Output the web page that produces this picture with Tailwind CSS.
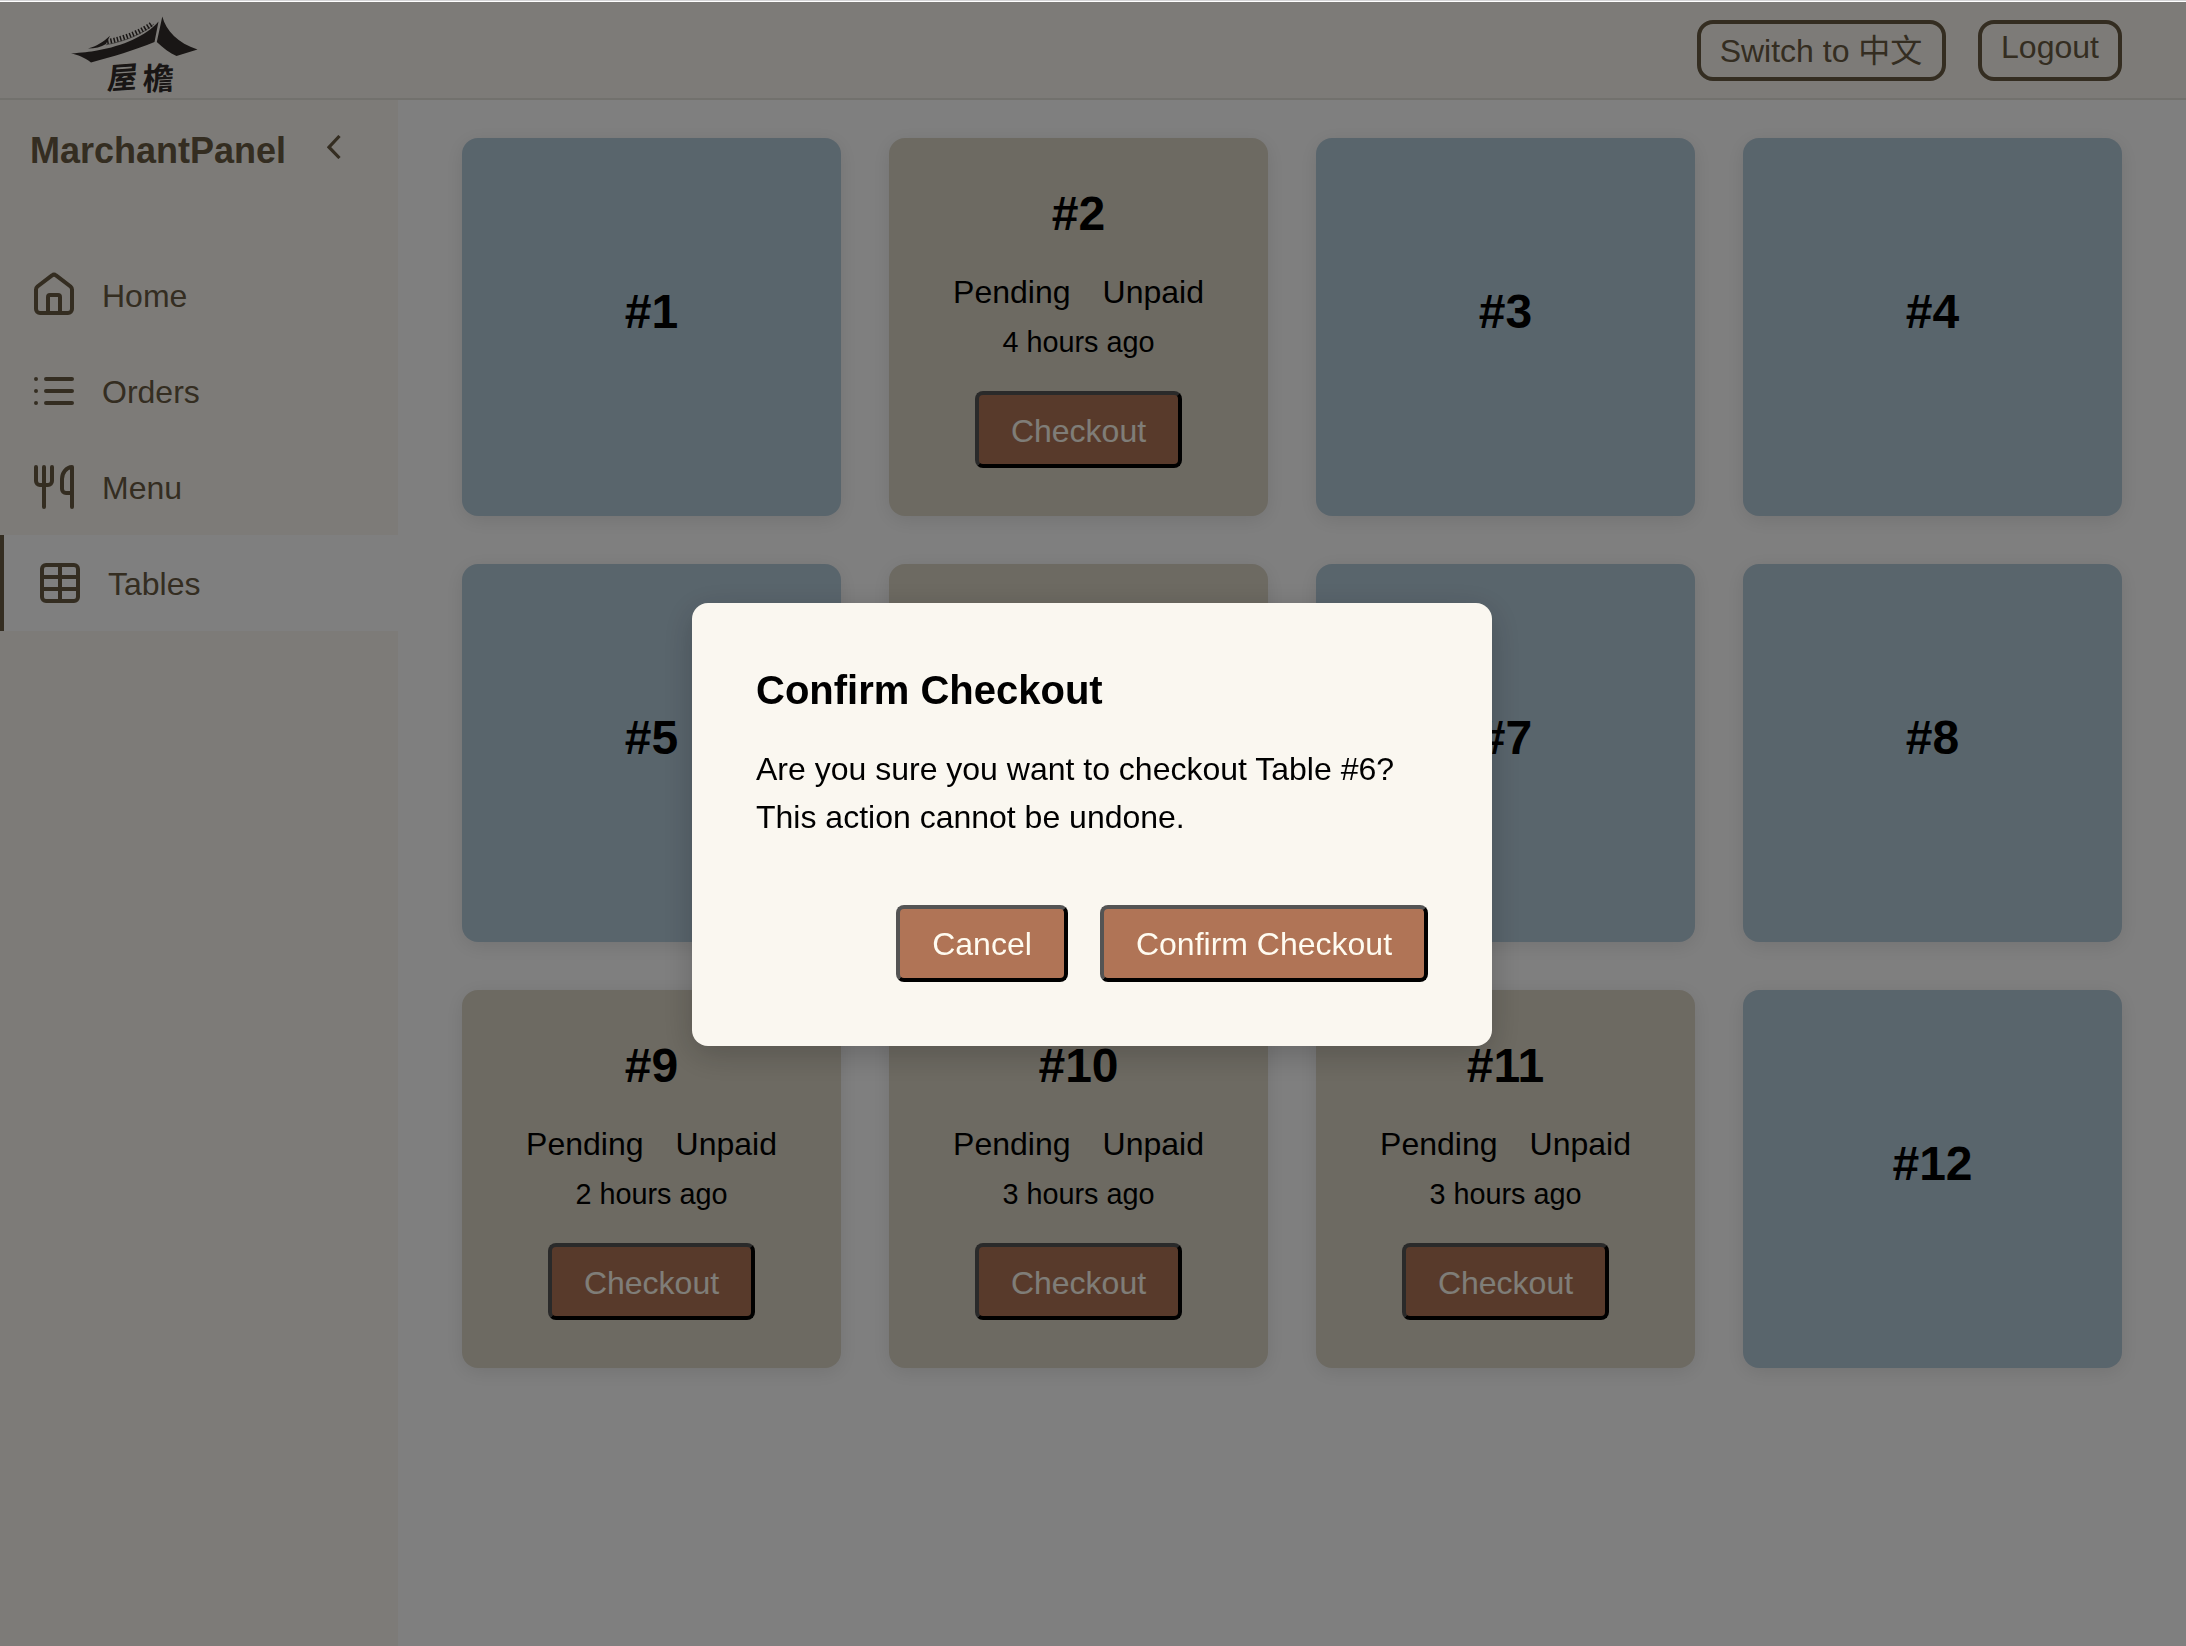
<!DOCTYPE html>
<html lang="en">
<head>
<meta charset="utf-8">
<title>MarchantPanel</title>
<script src="https://cdn.jsdelivr.net/npm/@tailwindcss/browser@4"></script>
</head>
<body class="flex h-[1646px] w-[2186px] flex-col overflow-hidden bg-white pt-[2px] font-['Liberation_Sans','Noto_Sans_CJK_SC',sans-serif] text-[32px] leading-[48px] text-black">
<div class="fixed inset-x-0 top-0 h-px bg-[#d4d4d6]"></div>
<header class="flex h-[98px] shrink-0 items-start justify-between border-b-2 border-[#e5e2da] bg-[#faf7f0] pr-16 text-[#695a43]">
  <svg class="h-[96px] w-[210px] overflow-visible text-[#332c2a]" viewBox="0 2 210 96" fill="currentColor">
    <path d="M71 53.500 C82 52.500 90 52 97 50.500 C123 46 146 36 158.500 21.500 L154.500 42 C135 50 112 57 91 62.500 C84 57 78 55 71 53.500Z"/>
    <path d="M162.300 16.500 C166 31 178 43 197.500 49.500 L176.500 56 C170 53 163 48 156.800 42Z"/>
    <path d="M88 48.500 C97 46 102 43 110 35.800 L106 44 C101 47 95 48.500 88 48.500Z"/>
    <path d="M106 44.800 C127 41 144 33 154 24" fill="none" stroke="currentColor" stroke-width="0.5"/>
    <path d="M107 41.700 C127 38 143 30.500 152.500 23.300" fill="none" stroke="currentColor" stroke-width="5" stroke-dasharray="1.500 1.800"/>
    <text x="0" y="0" transform="translate(106.500 89.500) rotate(-4) skewX(-10)" font-family="'Noto Sans CJK SC', sans-serif" font-weight="700" font-size="30">屋</text>
    <text x="0" y="0" transform="translate(142.500 90.500) rotate(-3) skewX(-4)" font-family="'Noto Sans CJK TC', sans-serif" font-weight="700" font-size="31">檐</text>
  </svg>
  <div class="flex gap-8 pt-[18px]">
    <button class="flex h-[61px] w-[249px] items-center justify-center whitespace-pre rounded-[16px] border-4 border-current pr-px pt-px">Switch to 中文</button>
    <button class="flex h-[61px] w-[144px] items-center justify-center rounded-[16px] border-4 border-current pb-[7px]">Logout</button>
  </div>
</header>
<div class="flex min-h-0 flex-1">
  <aside class="w-[398px] shrink-0 bg-[#faf7f0] text-[#695a43]">
    <div class="flex h-[147px] items-start pl-[30px] pt-[27px]">
      <h1 class="w-[297px] text-[36px] font-bold leading-[48px]">MarchantPanel</h1>
      <svg class="mt-[8px] h-6 w-[14px]" viewBox="0 0 14 24" fill="none" stroke="currentColor" stroke-width="3.200"><path d="M12.500 1 L2 12.200 L12.500 23"/></svg>
    </div>
    <nav>
      <a class="flex h-24 items-center gap-6 pl-[30px]">
        <svg class="size-12" viewBox="0 0 24 24" fill="none" stroke="currentColor" stroke-width="2"><path d="M15 21v-8a1 1 0 0 0-1-1h-4a1 1 0 0 0-1 1v8"/><path d="M3 9.300V19a2 2 0 0 0 2 2h14a2 2 0 0 0 2-2V9.300a2 2 0 0 0-.73-1.540L13 2.230a1.600 1.600 0 0 0-2 0L3.730 7.760A2 2 0 0 0 3 9.300z"/></svg>
        <span class="pt-[2px]">Home</span>
      </a>
      <a class="flex h-24 items-center gap-6 pl-[30px]">
        <svg class="size-12" viewBox="0 0 24 24" fill="none" stroke="currentColor" stroke-width="2" stroke-linecap="round"><path d="M8 6h13M8 12h13M8 18h13M3 6h0M3 12h0M3 18h0"/></svg>
        <span class="pt-[2px]">Orders</span>
      </a>
      <a class="flex h-24 items-center gap-6 pl-[30px]">
        <svg class="size-12" viewBox="0 0 24 24" fill="none" stroke="currentColor" stroke-width="2" stroke-linecap="round" stroke-linejoin="round"><path d="M3 2v7a2 2 0 0 0 2 2h4a2 2 0 0 0 2-2V2M7 2v20M21 2v20M21 2c-2.800 0-5 3-5 6v5a2 2 0 0 0 2 2h3"/></svg>
        <span class="pt-[2px]">Menu</span>
      </a>
      <a class="flex h-24 items-center gap-6 border-l-4 border-[#695a43] bg-white pl-8">
        <svg class="size-12" viewBox="0 0 24 24" fill="none" stroke="currentColor" stroke-width="2"><rect x="3" y="3" width="18" height="18" rx="2"/><path d="M12 3v18M3 9h18M3 15h18"/></svg>
        <span class="pt-[2px]">Tables</span>
      </a>
    </nav>
  </aside>
  <main class="grid flex-1 auto-rows-[378px] grid-cols-4 gap-12 px-16 pt-[38px] text-center">
    <section class="flex flex-col items-center justify-center rounded-[16px] bg-[#b3cad9] pb-[30px] shadow-[0_4px_20px_rgba(0,0,0,0.1)]"><h2 class="text-[48px] font-bold leading-[72px]">#1</h2></section>
    <section class="flex flex-col items-center rounded-[16px] bg-[#dad4c4] pt-10 shadow-[0_4px_20px_rgba(0,0,0,0.1)]">
      <h2 class="text-[48px] font-bold leading-[72px]">#2</h2>
      <p class="mt-[18px] flex gap-8"><span>Pending</span><span>Unpaid</span></p>
      <p class="mt-[5px] text-[28.8px] leading-[43px]">4 hours ago</p>
      <button class="mt-[27px] h-[77px] w-[207px] rounded-lg border-4 border-black bg-[#b07456] pt-[2px] leading-[60px] text-[#fffbf0] [border-style:outset]">Checkout</button>
    </section>
    <section class="flex flex-col items-center justify-center rounded-[16px] bg-[#b3cad9] pb-[30px] shadow-[0_4px_20px_rgba(0,0,0,0.1)]"><h2 class="text-[48px] font-bold leading-[72px]">#3</h2></section>
    <section class="flex flex-col items-center justify-center rounded-[16px] bg-[#b3cad9] pb-[30px] shadow-[0_4px_20px_rgba(0,0,0,0.1)]"><h2 class="text-[48px] font-bold leading-[72px]">#4</h2></section>
    <section class="flex flex-col items-center justify-center rounded-[16px] bg-[#b3cad9] pb-[30px] shadow-[0_4px_20px_rgba(0,0,0,0.1)]"><h2 class="text-[48px] font-bold leading-[72px]">#5</h2></section>
    <section class="rounded-[16px] bg-[#dad4c4] shadow-[0_4px_20px_rgba(0,0,0,0.1)]"></section>
    <section class="flex flex-col items-center justify-center rounded-[16px] bg-[#b3cad9] pb-[30px] shadow-[0_4px_20px_rgba(0,0,0,0.1)]"><h2 class="text-[48px] font-bold leading-[72px]">#7</h2></section>
    <section class="flex flex-col items-center justify-center rounded-[16px] bg-[#b3cad9] pb-[30px] shadow-[0_4px_20px_rgba(0,0,0,0.1)]"><h2 class="text-[48px] font-bold leading-[72px]">#8</h2></section>
    <section class="flex flex-col items-center rounded-[16px] bg-[#dad4c4] pt-10 shadow-[0_4px_20px_rgba(0,0,0,0.1)]">
      <h2 class="text-[48px] font-bold leading-[72px]">#9</h2>
      <p class="mt-[18px] flex gap-8"><span>Pending</span><span>Unpaid</span></p>
      <p class="mt-[5px] text-[28.8px] leading-[43px]">2 hours ago</p>
      <button class="mt-[27px] h-[77px] w-[207px] rounded-lg border-4 border-black bg-[#b07456] pt-[2px] leading-[60px] text-[#fffbf0] [border-style:outset]">Checkout</button>
    </section>
    <section class="flex flex-col items-center rounded-[16px] bg-[#dad4c4] pt-10 shadow-[0_4px_20px_rgba(0,0,0,0.1)]">
      <h2 class="text-[48px] font-bold leading-[72px]">#10</h2>
      <p class="mt-[18px] flex gap-8"><span>Pending</span><span>Unpaid</span></p>
      <p class="mt-[5px] text-[28.8px] leading-[43px]">3 hours ago</p>
      <button class="mt-[27px] h-[77px] w-[207px] rounded-lg border-4 border-black bg-[#b07456] pt-[2px] leading-[60px] text-[#fffbf0] [border-style:outset]">Checkout</button>
    </section>
    <section class="flex flex-col items-center rounded-[16px] bg-[#dad4c4] pt-10 shadow-[0_4px_20px_rgba(0,0,0,0.1)]">
      <h2 class="text-[48px] font-bold leading-[72px]">#11</h2>
      <p class="mt-[18px] flex gap-8"><span>Pending</span><span>Unpaid</span></p>
      <p class="mt-[5px] text-[28.8px] leading-[43px]">3 hours ago</p>
      <button class="mt-[27px] h-[77px] w-[207px] rounded-lg border-4 border-black bg-[#b07456] pt-[2px] leading-[60px] text-[#fffbf0] [border-style:outset]">Checkout</button>
    </section>
    <section class="flex flex-col items-center justify-center rounded-[16px] bg-[#b3cad9] pb-[30px] shadow-[0_4px_20px_rgba(0,0,0,0.1)]"><h2 class="text-[48px] font-bold leading-[72px]">#12</h2></section>
  </main>
</div>
<div class="fixed inset-x-0 bottom-0 top-[2px] flex items-center justify-center bg-black/50 pr-[2px]">
  <div class="h-[443px] w-[800px] rounded-[16px] bg-[#faf7f0] px-16 pt-[57px] shadow-[0_8px_32px_rgba(0,0,0,0.2)]">
    <h3 class="text-[40px] font-bold leading-[60px]">Confirm Checkout</h3>
    <p class="mt-[25px]">Are you sure you want to checkout Table #6?<br>This action cannot be undone.</p>
    <div class="mt-16 flex justify-end gap-8">
      <button class="h-[77px] w-[172px] rounded-lg border-4 border-black bg-[#b07456] pt-[2px] leading-[60px] text-[#fffbf0] [border-style:outset]">Cancel</button>
      <button class="h-[77px] w-[328px] rounded-lg border-4 border-black bg-[#b07456] pt-[2px] leading-[60px] text-[#fffbf0] [border-style:outset]">Confirm Checkout</button>
    </div>
  </div>
</div>
</body>
</html>
